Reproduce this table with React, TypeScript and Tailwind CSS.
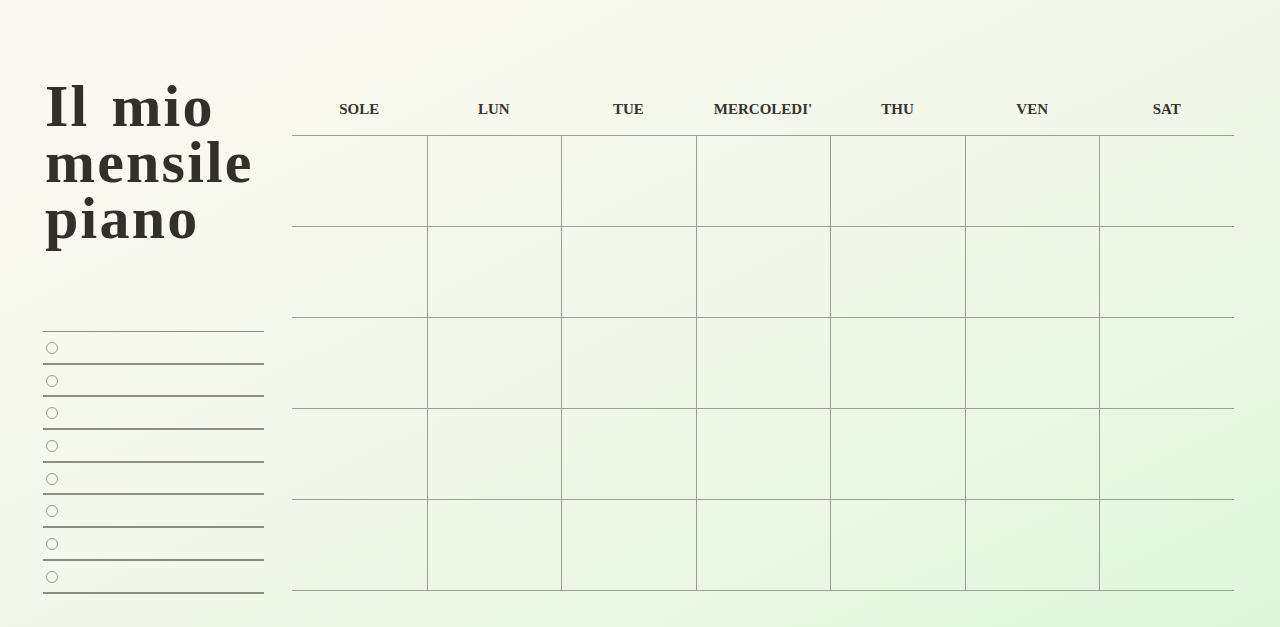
const days = ["SOLE", "LUN", "TUE", "MERCOLEDI'", "THU", "VEN", "SAT"];

export default function App() {
	const cells = Array.from({ length: 35 }, (_, i) => i);
	return (
		<div className="h-[627px] w-full overflow-hidden bg-gradient-to-br from-[#fcf9f3] via-[#f3f8ea] to-[#def6dd] font-['Liberation_Serif',serif]">
			<div className="flex pl-[43px] pt-[78px]">
				<div className="flex w-[221px] flex-col">
					<h1 className="flex flex-col pl-[2px] text-[60px] font-bold tracking-[2.2px] text-[#33302b]">
						<span className="h-[56px] leading-[56px]">
							Il<span className="inline-block w-[22px]"></span>mio
						</span>
						<span className="h-[56px] leading-[56px]">mensile</span>
						<span className="h-[56px] leading-[56px]">piano</span>
					</h1>
					<div className="mt-[85px] border-t-[1.5px] border-[#8e8d85]">
						{Array.from({ length: 8 }, (_, i) => (
							<div key={i} className="flex h-[32.7px] items-center border-b-2 border-[#8e8d85] pl-[3px] pt-[1px]">
								<span className="h-3 w-3 rounded-full border border-[#9a9992]"></span>
							</div>
						))}
					</div>
				</div>
				<div className="ml-[28px] mt-[12px] w-[942px]">
					<div className="grid h-[45px] grid-cols-7">
						{days.map((d) => (
							<div key={d} className="pt-[8px] text-center text-[15px] font-bold text-[#35342f]">
								{d}
							</div>
						))}
					</div>
					<div className="grid grid-cols-7 border-t border-[#9c9d93]">
						{cells.map((i) => (
							<div
								key={i}
								className={`h-[91px] border-b border-[#9c9d93] ${i % 7 === 0 ? "" : "border-l"}`}
							></div>
						))}
					</div>
				</div>
			</div>
		</div>
	)
}
